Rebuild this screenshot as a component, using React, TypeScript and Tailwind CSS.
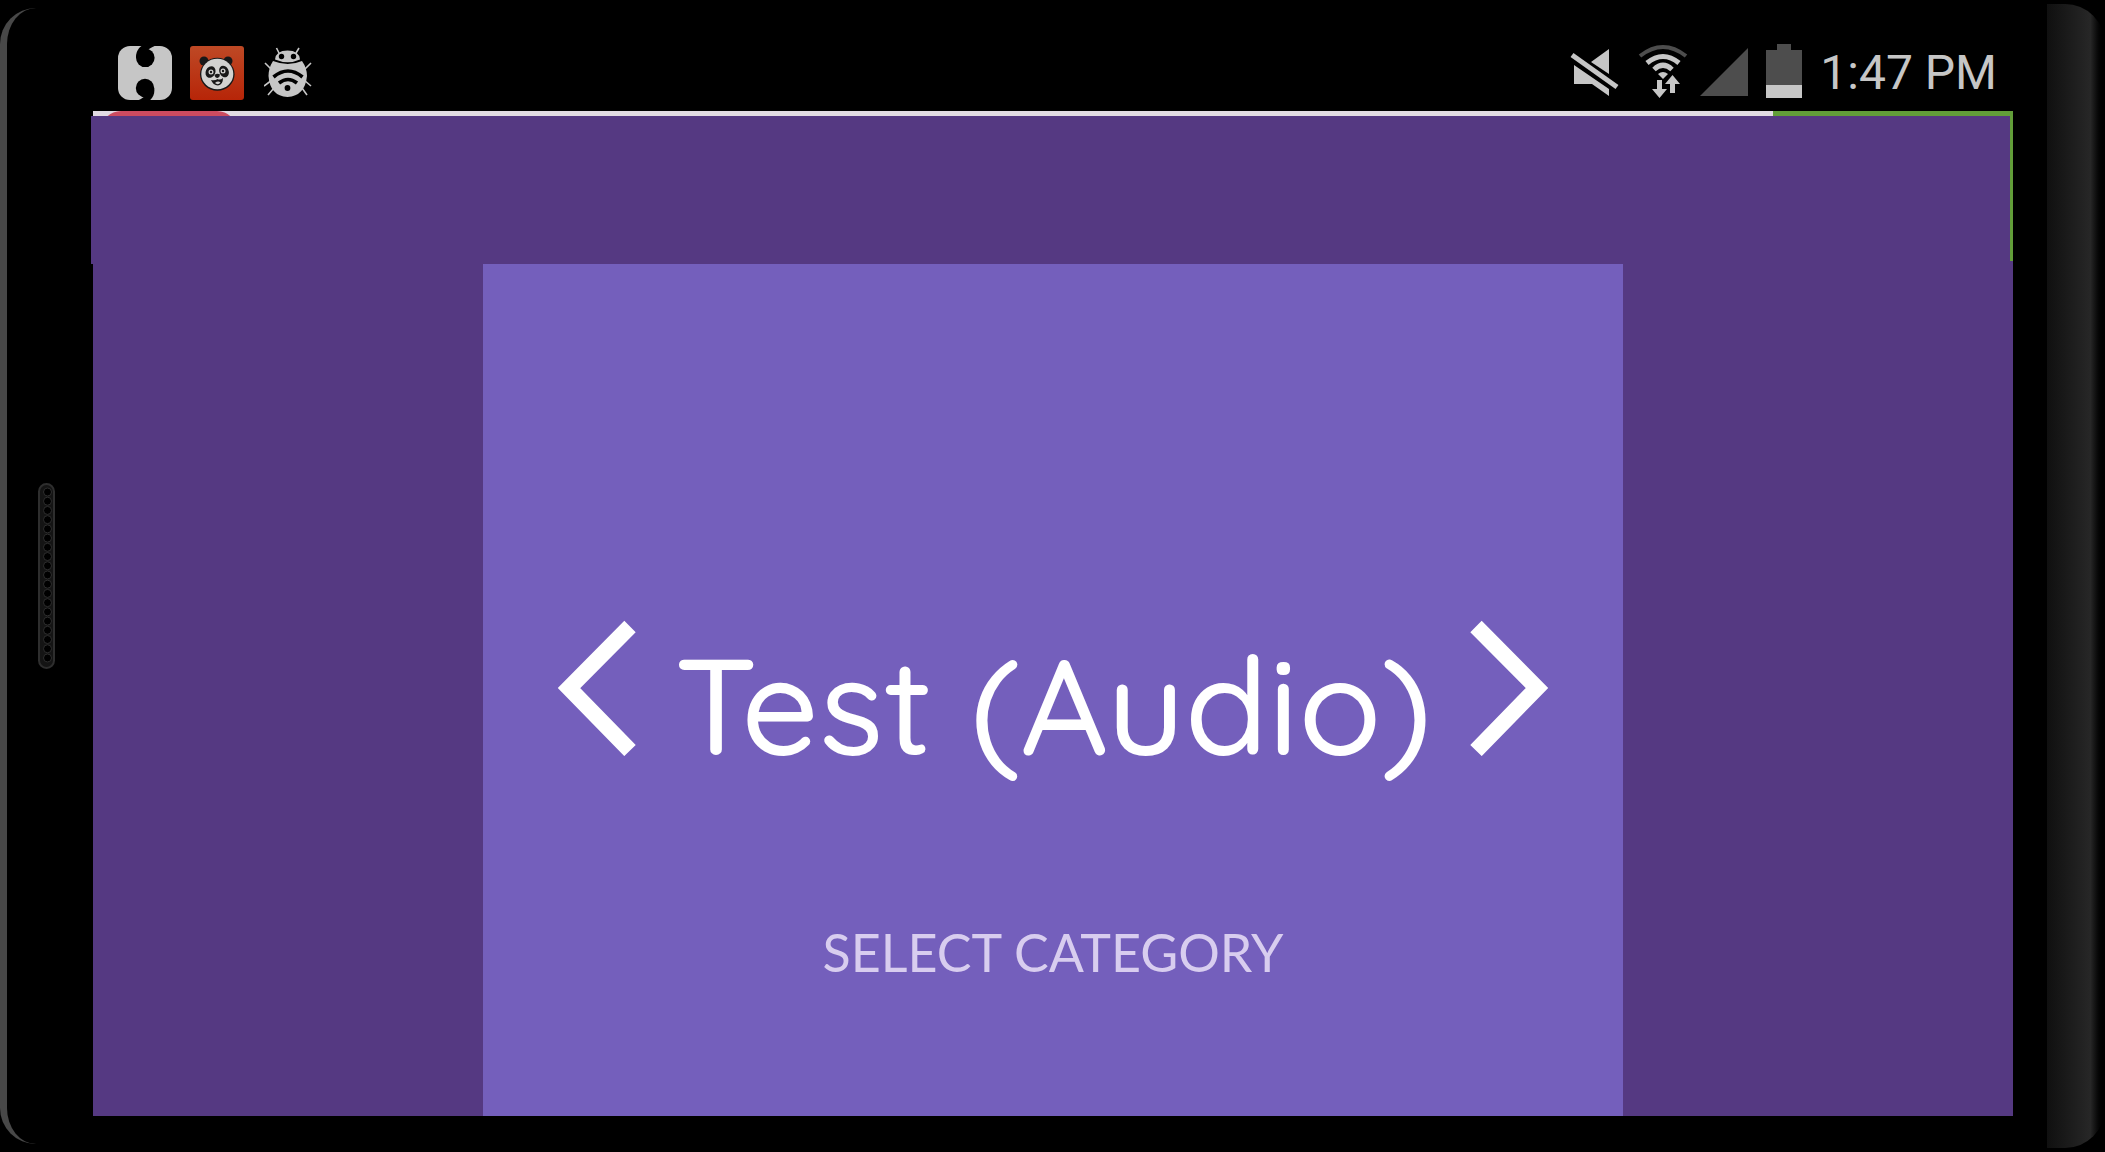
import { useState } from "react";

const categories = ["Test (Audio)"];

function QuoteIcon() {
  return (
    <svg viewBox="0 0 54 54" className="size-[54px]">
      <rect width="54" height="54" rx="12" fill="#c6c6c6" />
      <circle cx="27.300" cy="11.800" r="9.300" fill="#000" />
      <path d="M18 12 C18 6 20 2 25 -1 H39 C34 1 29 3 28 8Z" fill="#000" />
      <circle cx="27" cy="42" r="9.200" fill="#000" />
      <path d="M36.200 42 C37 48 35 52 31 55 H17 C22 54 27 52 28 46Z" fill="#000" />
    </svg>
  );
}

function PandaIcon() {
  return (
    <svg viewBox="0 0 54 54" className="size-[54px]">
      <defs>
        <linearGradient id="panda" x1="0" y1="0" x2="0" y2="1">
          <stop offset="0" stopColor="#be4925" />
          <stop offset="1" stopColor="#b72508" />
        </linearGradient>
      </defs>
      <rect width="54" height="54" rx="3" fill="url(#panda)" />
      <circle cx="14" cy="15" r="4.500" fill="#181818" />
      <circle cx="38" cy="15" r="4.500" fill="#181818" />
      <ellipse cx="27.300" cy="28.300" rx="17.300" ry="16.500" fill="#181818" />
      <ellipse cx="27.300" cy="28" rx="16" ry="15.200" fill="#d2d2d0" />
      <ellipse cx="20.500" cy="26" rx="4.800" ry="6" transform="rotate(25 20.500 26)" fill="#181818" />
      <ellipse cx="34" cy="25.500" rx="4.600" ry="6" transform="rotate(-25 34 25.500)" fill="#181818" />
      <circle cx="21" cy="26" r="2.500" fill="#d2d2d0" />
      <circle cx="33" cy="25" r="2.500" fill="#d2d2d0" />
      <circle cx="21" cy="26" r="1.200" fill="#181818" />
      <circle cx="33" cy="25" r="1.200" fill="#181818" />
      <path d="M24.500 29 Q27 27 30 28.500 Q30 31 27.500 32 Q25 32 24.500 29Z" fill="#181818" />
      <path d="M21 34 Q25 35 27.500 33 Q30 34.500 33 32 Q33 39 28 39.500 Q23 39 21 34Z" fill="#181818" />
      <path d="M25 37 Q28 34.500 30.500 36.500 Q28 39.500 25 37Z" fill="#d2d2d0" />
    </svg>
  );
}

function BugIcon() {
  return (
    <svg viewBox="0 0 48 54" className="h-[54px] w-12" fill="none" stroke="#c6c6c6" strokeWidth="1.600">
      <path d="M12.500 2 L15 7 M35 2 L32 7 M1 17 L7 23 M47 17 L41 23 M0 40 L8 34 M47 40 L40 34 M4 49 L10 42 M43 49 L38 42" />
      <path d="M11 13.500 Q12 4.500 23.500 4.500 Q35 4.500 36 13.500 Q24 19 11 13.500Z" fill="#c6c6c6" stroke="none" />
      <path d="M9 15 Q24 21 38 15 Q43 22 43 30 Q41 50 23.500 51 Q6 50 4.500 30 Q4.500 22 9 15Z" fill="#c6c6c6" stroke="none" />
      <circle cx="17.500" cy="10.500" r="2.700" fill="#000" stroke="none" />
      <circle cx="29.500" cy="10.500" r="2.700" fill="#000" stroke="none" />
      <path d="M9.500 31 Q24 19 38.500 31 M15 37 Q24 30 33 37" stroke="#000" strokeWidth="3.600" />
      <circle cx="23.500" cy="42" r="2.900" fill="#000" stroke="none" />
    </svg>
  );
}

function MuteIcon() {
  return (
    <svg viewBox="0 0 56 50" className="h-[50px] w-14" fill="#c6c6c6">
      <path d="M4 17 L39 41 V48 L22 36 H4Z M21 14 L39 1 V26Z" />
      <path d="M2 7 L47 39" stroke="#c6c6c6" strokeWidth="5" />
    </svg>
  );
}

function WifiIcon() {
  return (
    <svg viewBox="0 0 50 54" className="h-[54px] w-[50px]" fill="none" stroke="#c6c6c6" strokeWidth="5">
      <path d="M2 12 Q25 -6 48 12" stroke="#4d4d4d" strokeWidth="4" />
      <path d="M9 19 Q25 6 41 19 M16 25.500 Q25 17 34 25.500" />
      <path d="M20 30 Q25 26 30 30 L25 35Z" fill="#c6c6c6" stroke="none" />
      <path
        d="M19 36 h5 v9 h5 l-7.500 9 l-7.500 -9 h5Z M32 49 h5 v-9 h5 l-7.500 -9 l-7.500 9 h5Z"
        fill="#c6c6c6"
        stroke="none"
      />
    </svg>
  );
}

function SignalIcon() {
  return (
    <svg viewBox="0 0 48 50" className="h-[50px] w-12">
      <path d="M0 48 L48 0 V48Z" fill="#4d4d4d" />
    </svg>
  );
}

function BatteryIcon() {
  return (
    <svg viewBox="0 0 36 54" className="h-[54px] w-9">
      <path d="M0 6 H11 V0 H25 V6 H36 V41 H0Z" fill="#4d4d4d" />
      <path d="M0 41 H36 V54 H0Z" fill="#c6c6c6" />
    </svg>
  );
}

function Speaker() {
  return (
    <svg viewBox="0 0 18 186" className="h-[186px] w-[18px]" fill="#000" stroke="#2e2e2e">
      <rect x="1" y="1" width="15" height="184" rx="7.500" fill="#141414" strokeWidth="2" />
      {Array.from({ length: 19 }, (_, i) => (
        <circle key={i} cx="9.500" cy={9 + i * 9.22} r="4" />
      ))}
    </svg>
  );
}

function StatusBar() {
  return (
    <header className="flex h-[111px] items-end justify-between pr-4 pb-[11px] pl-[25px]">
      <div className="flex items-center gap-5">
        <div className="flex gap-[18px]">
          <QuoteIcon />
          <PandaIcon />
        </div>
        <BugIcon />
      </div>
      <div className="flex items-end gap-[18px] pb-0.5 text-[#c6c6c6]">
        <div className="flex items-end gap-3">
          <MuteIcon />
          <WifiIcon />
          <SignalIcon />
        </div>
        <BatteryIcon />
        <time className="font-[Roboto,sans-serif] text-5xl leading-[50px]">1:47 PM</time>
      </div>
    </header>
  );
}

export default function App() {
  const [index, setIndex] = useState(0);
  const move = (step: number) =>
    setIndex((index + step + categories.length) % categories.length);

  return (
    <div className="flex min-h-screen bg-black">
      {/* left bezel */}
      <div className="my-2 flex w-[93px] shrink-0 items-center rounded-l-[36px] border-l-[7px] border-[#484848] pl-[31px]">
        <Speaker />
      </div>

      <div className="flex grow flex-col pb-9">
        <StatusBar />
        <div className="flex h-[5px] justify-between overflow-hidden bg-[#e2dbe3]">
          <div className="ml-2 h-10 w-[136px] rounded-[28px] bg-[#cc4b60]" />
          <div className="w-60 bg-[#629e39]" />
        </div>
        <main className="flex grow flex-col bg-[#553982]">
          <div className="-ml-0.5 flex h-[148px] justify-end bg-[#553982]">
            <div className="h-[145px] w-[3px] bg-[#629e39]" />
          </div>
          <section className="mx-auto flex w-[1140px] grow flex-col bg-[#745fbc] px-[74px] pt-[356px]">
            <div className="flex items-start justify-between">
              <button aria-label="Previous category" onClick={() => move(-1)}>
                <svg viewBox="0 0 80 136" className="h-[136px] w-20" fill="none" stroke="#fff" strokeWidth="16">
                  <path d="M73 6.500 L12 68 L73 130.500" />
                </svg>
              </button>
              <h1 className="pt-3.5 font-[Quicksand,Lato,sans-serif] text-[136px] leading-[140px] font-medium text-white">
                {categories[index]}
              </h1>
              <button aria-label="Next category" onClick={() => move(1)}>
                <svg viewBox="0 0 80 136" className="h-[136px] w-20" fill="none" stroke="#fff" strokeWidth="16">
                  <path d="M7 6.500 L68 68 L7 130.500" />
                </svg>
              </button>
            </div>
            <p className="mt-[146px] text-center font-[Lato,sans-serif] text-[52px] leading-16 text-[#d8cdef]">
              SELECT CATEGORY
            </p>
          </section>
        </main>
      </div>

      {/* right bezel */}
      <div className="my-1 ml-[34px] w-[58px] shrink-0 rounded-r-[40px] bg-linear-to-r from-[#101010] via-[#272727] via-75% to-black" />
    </div>
  );
}
